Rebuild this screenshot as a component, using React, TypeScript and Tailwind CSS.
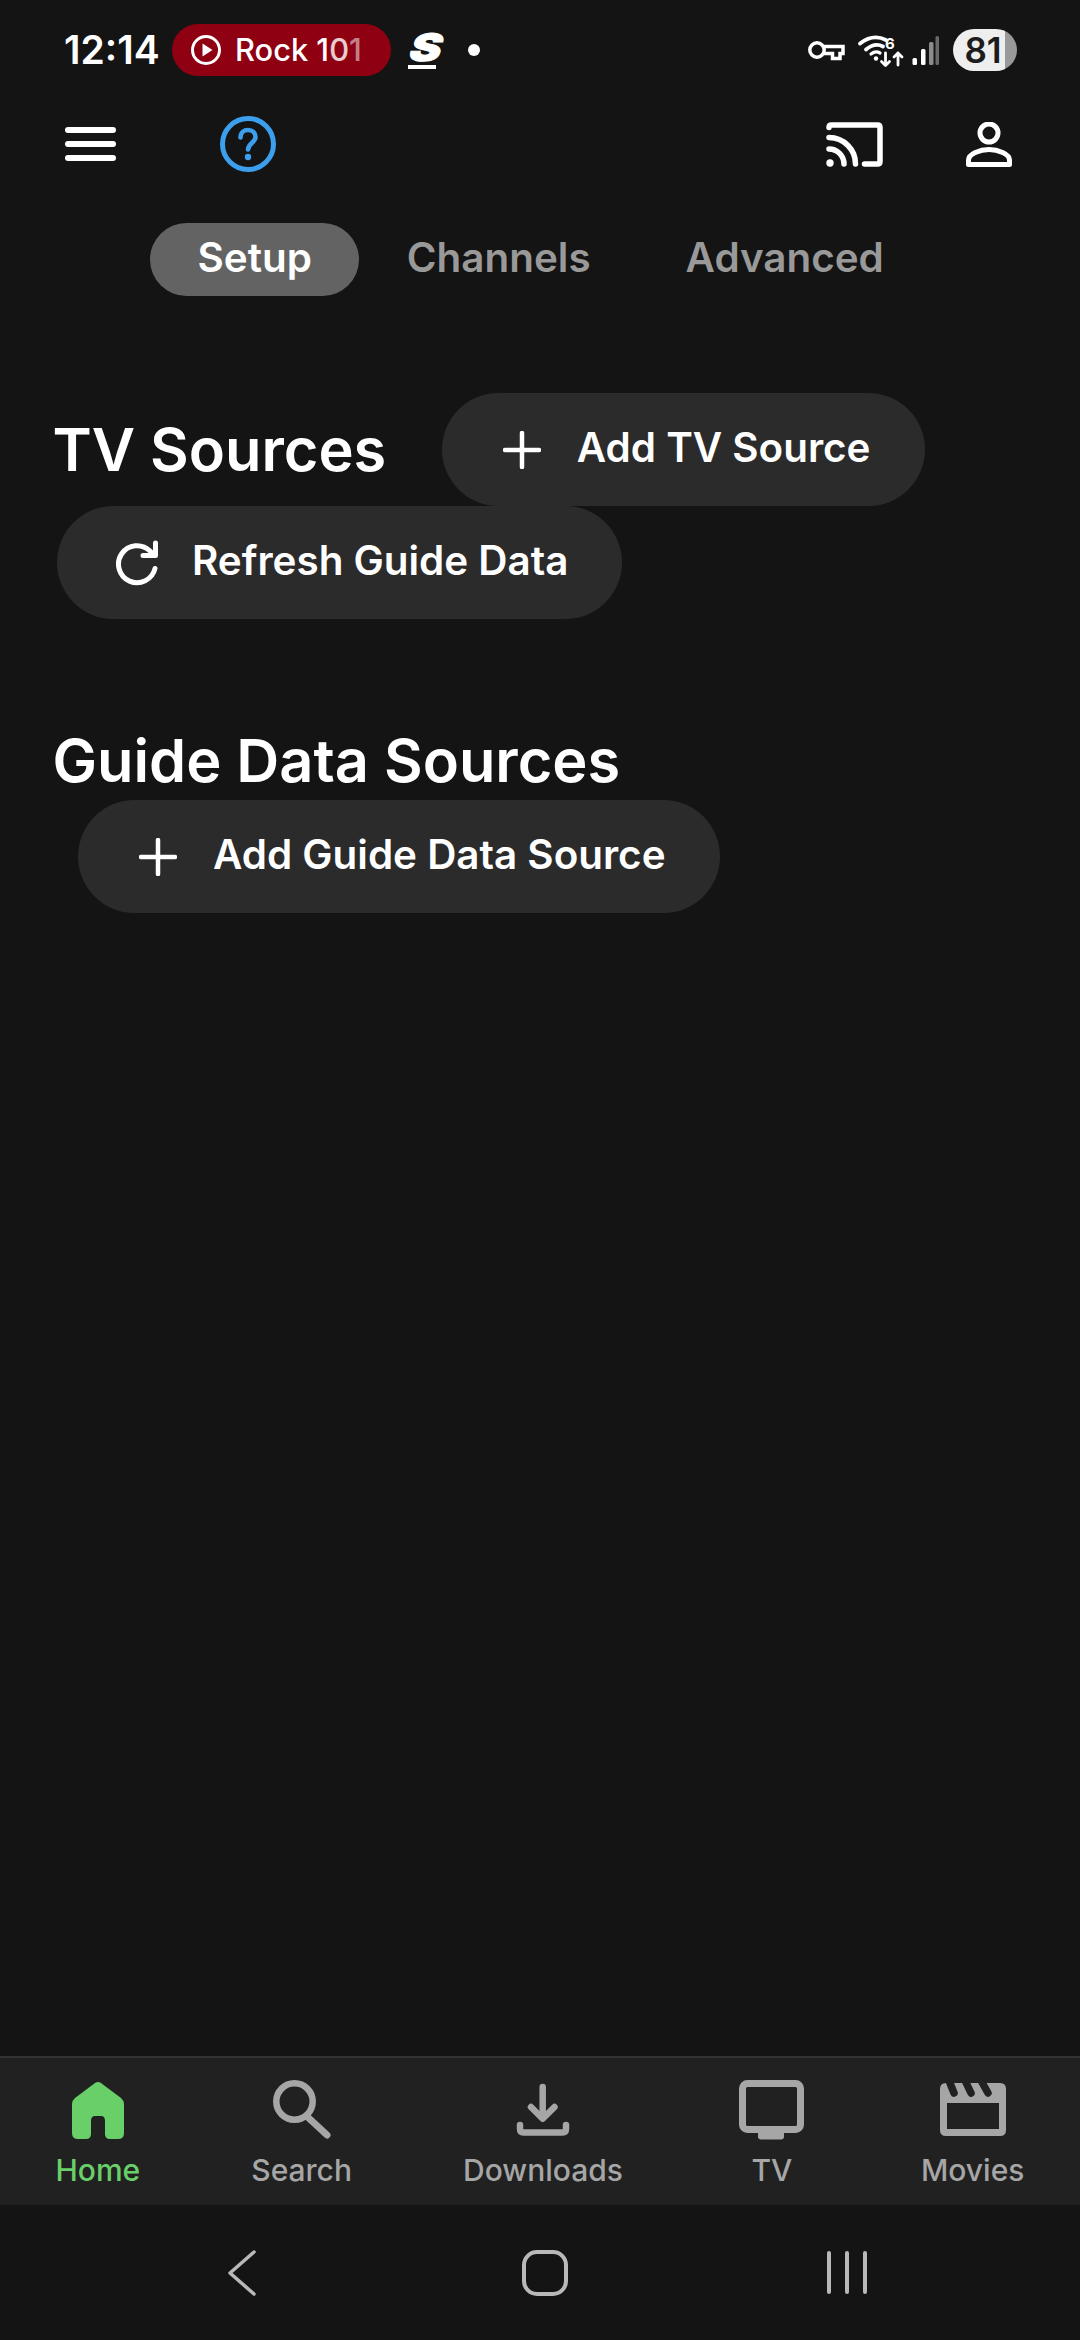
import React from 'react';

const PlusIcon = () => (
  <svg width="38" height="38" viewBox="0 0 38 38" fill="none" stroke="white" strokeWidth="4.5" strokeLinecap="round">
    <path d="M19 2v34M2 19h34" />
  </svg>
);

const RefreshIcon = () => (
  <svg width="46" height="46" viewBox="0 0 46 46" fill="none" stroke="white" strokeWidth="5" strokeLinecap="round" strokeLinejoin="round">
    <path d="M41 28.5A18.5 18.5 0 1 1 36 11L40 15" />
    <path d="M41.5 3v12.5H29" />
  </svg>
);

const ActionPill = ({ icon, label, className }: { icon: React.ReactNode; label: string; className: string }) => (
  <button className={`flex h-[113px] items-center gap-[25px] rounded-full bg-[#2b2b2b] pl-[50px] pr-[54px] ${className}`}>
    <span className="flex w-[60px] items-center justify-center">{icon}</span>
    <span className="pb-[2px] text-[40.4px] font-semibold text-white">{label}</span>
  </button>
);

const StatusBar = () => (
  <div className="flex h-[100px] items-center pl-[64px] pr-[63px] text-white">
    <span className="w-[95px] text-[39px] font-semibold">12:14</span>
    <div className="ml-[13px] flex h-[52px] w-[219px] items-center gap-[14px] rounded-full bg-[#8e0012] pl-[19px]">
      <svg width="30" height="30" viewBox="0 0 30 30" fill="none">
        <circle cx="15" cy="15" r="13.5" stroke="white" strokeWidth="3" />
        <path d="M11.5 8.5 21.5 15l-10 6.5z" fill="white" />
      </svg>
      <span className="text-[30.8px] font-medium leading-none">
        Rock 1<span className="text-white/80">0</span><span className="text-white/50">1</span>
      </span>
    </div>
    <div className="ml-[17px] flex w-[34px] flex-col items-center">
      <span className="translate-x-[2px] scale-x-125 skew-x-[-14deg] text-[38px] font-black leading-[31px] [-webkit-text-stroke:1px_white]">S</span>
      <div className="mt-[2px] h-[4px] w-[28px] -translate-x-[3px] bg-white" />
    </div>
    <div className="ml-[26px] h-[12px] w-[12px] rounded-full bg-white" />

    <svg className="ml-auto" width="37" height="22" viewBox="0 0 37 22" fill="none" stroke="white" strokeWidth="3.5">
      <circle cx="9" cy="11" r="7.2" />
      <path d="M16 7.5h19v7h-3v5h-7.5v-5H16" />
    </svg>
    <svg className="ml-[5px]" width="95" height="44" viewBox="0 0 95 44" fill="none" stroke="white" strokeLinecap="round">
      <path d="M10 15.5Q23 5.5 36 12" strokeWidth="3.8" />
      <path d="M16 21.5Q25 14 33 18.5" strokeWidth="3.8" />
      <path d="M21 26Q25.5 22.5 30 25" strokeWidth="3.2" />
      <circle cx="26" cy="30.5" r="2.2" fill="white" stroke="none" />
      <text x="35" y="20.500" fontSize="15" fontWeight="700" fill="white" stroke="none" fontFamily="Inter, sans-serif">6</text>
      <path d="M35.5 25v12M31.5 33.5l4 4 4-4M48 37V25M44 29l4-4 4 4" strokeWidth="2.8" strokeLinejoin="round" />
      <rect x="62.5" y="30" width="4.5" height="7" rx="1.5" fill="white" stroke="none" />
      <rect x="71" y="21" width="4.5" height="16" rx="1.5" fill="white" stroke="none" />
      <rect x="79" y="14" width="4.5" height="23" rx="1.5" fill="#8c8c8c" stroke="none" />
      <rect x="85.5" y="8" width="3.5" height="29" rx="1.5" fill="#6a6a6a" stroke="none" />
    </svg>
    <div className="ml-[8px] flex h-[42px] w-[64px] items-center justify-center rounded-full bg-[linear-gradient(90deg,#eeeeee_81%,#999999_81%)] pr-[4px] text-[35px] font-semibold text-[#1c1c1c]">
      81
    </div>
  </div>
);

const Toolbar = () => (
  <div className="flex h-[88px] items-center pl-[65px] pr-[68px]">
    <div className="flex w-[51px] flex-col gap-[8px]">
      <div className="h-[6px] rounded-full bg-white" />
      <div className="h-[6px] rounded-full bg-white" />
      <div className="h-[6px] rounded-full bg-white" />
    </div>
    <svg className="ml-[104px]" width="56" height="56" viewBox="0 0 56 56" fill="none">
      <circle cx="28" cy="28" r="25.5" stroke="#3b9fee" strokeWidth="5" />
      <path d="M20.5 21.5C20.5 16.5 24 14 28 14C32.5 14 35.5 17 35.5 21C35.5 26.5 28.5 27 28 33.5" stroke="#3b9fee" strokeWidth="4.6" strokeLinecap="round" />
      <circle cx="28" cy="41" r="3.200" fill="#3b9fee" />
    </svg>
    <svg className="ml-auto" width="57" height="45" viewBox="0 0 57 45" fill="none" stroke="white" strokeWidth="5.5" strokeLinecap="round">
      <path d="M3 5.5Q3 3 5.5 3H51.5Q54 3 54 5.5V39.5Q54 42 51.5 42H38.5" />
      <path d="M3 15.5A26.5 26.5 0 0 1 29.5 42" />
      <path d="M3 27A15 15 0 0 1 18 42" />
      <circle cx="4" cy="41" r="3.7" fill="white" stroke="none" />
    </svg>
    <svg className="ml-[83px]" width="46" height="45" viewBox="0 0 46 45" fill="none" stroke="white" strokeWidth="5" strokeLinejoin="round">
      <circle cx="23" cy="11" r="9" />
      <path d="M2.5 42.5V38C2.5 32 14 27.5 23 27.5C32 27.5 43.5 32 43.5 38V42.5Z" />
    </svg>
  </div>
);

const Tabs = () => (
  <div className="mt-[35px] flex pl-[150px] text-[40.4px] font-semibold">
    <div className="flex h-[73px] items-center rounded-full bg-[#636363] px-[47.5px] pb-[2px] text-white">Setup</div>
    <div className="flex h-[73px] items-center px-[47.5px] pb-[2px] text-[#999999]">Channels</div>
    <div className="flex h-[73px] items-center px-[47.5px] pb-[2px] text-[#999999]">Advanced</div>
  </div>
);

const HomeIcon = () => (
  <svg width="52" height="60" viewBox="0 -2 52 60" fill="#69cf68">
    <path fillRule="evenodd" d="M23 1Q26 -1 29 1L49 16Q52 18.5 52 22V51Q52 57 46 57H38Q33 57 33 52V39Q33 34 29 34H23Q19 34 19 39V52Q19 57 14 57H6Q0 57 0 51V22Q0 18.5 3 16Z" />
  </svg>
);

const SearchIcon = () => (
  <svg width="58" height="60" viewBox="0 0 58 60" fill="none" stroke="#a6a6a6" strokeLinecap="round">
    <circle cx="21.5" cy="21.5" r="18.2" strokeWidth="6.5" />
    <path d="M33.5 36 54 55" strokeWidth="7" />
  </svg>
);

const DownloadIcon = () => (
  <svg width="56" height="60" viewBox="14 10 56 60" fill="none" stroke="#a6a6a6" strokeWidth="6.5" strokeLinecap="round" strokeLinejoin="round">
    <path d="M41.7 17V48M30 37l11.7 11.7L53.500 37" />
    <path d="M19 55V59Q19 62.500 22.500 62.500H61.500Q65 62.500 65 59V55" />
  </svg>
);

const TvIcon = () => (
  <svg width="65" height="60" viewBox="0 0 65 60" fill="none">
    <rect x="3.500" y="3.500" width="58" height="46" rx="5" stroke="#a6a6a6" strokeWidth="7" />
    <rect x="19" y="50" width="26" height="9.500" rx="3" fill="#a6a6a6" />
  </svg>
);

const MoviesIcon = () => (
  <svg width="70" height="60" viewBox="8 10 70 60" fill="none">
    <path fillRule="evenodd" fill="#a6a6a6" d="M16 13H70Q76 13 76 19V60Q76 66 70 66H16Q10 66 10 60V19Q10 13 16 13ZM17 33V59H69V33Z" />
    <path d="M19 10.500 24 23M35 10.500 41 23M51 10.500 58 23" stroke="#212121" strokeWidth="7.500" strokeLinecap="round" />
  </svg>
);

const navItems = [
  { label: 'Home', icon: <HomeIcon />, color: 'text-[#69cf68]' },
  { label: 'Search', icon: <SearchIcon />, color: 'text-[#a6a6a6]' },
  { label: 'Downloads', icon: <DownloadIcon />, color: 'text-[#a6a6a6]' },
  { label: 'TV', icon: <div className="flex w-[76px] justify-center"><TvIcon /></div>, color: 'text-[#a6a6a6]' },
  { label: 'Movies', icon: <MoviesIcon />, color: 'text-[#a6a6a6]' },
];

const BottomNav = () => (
  <nav className="mt-auto flex h-[149px] justify-around border-t-2 border-[#333333] bg-[#212121] pt-[22px]">
    {navItems.map((item) => (
      <div key={item.label} className="flex flex-col items-center">
        {item.icon}
        <span className={`mt-[11px] text-[30px] font-medium leading-[38px] ${item.color}`}>{item.label}</span>
      </div>
    ))}
  </nav>
);

const SystemNav = () => (
  <div className="flex h-[135px] items-start pl-[228px] pt-[45px]">
    <svg width="28" height="46" viewBox="0 0 28 46" fill="none" stroke="#b9b9b9" strokeWidth="3.500" strokeLinecap="round" strokeLinejoin="round">
      <path d="M26 2 2 23l24 21" />
    </svg>
    <div className="ml-[266px] h-[46px] w-[46px] rounded-[15px] border-[4px] border-[#b9b9b9]" />
    <div className="ml-[259px] mt-[1px] flex gap-[14px]">
      <div className="h-[43px] w-[4px] rounded-full bg-[#b9b9b9]" />
      <div className="h-[43px] w-[4px] rounded-full bg-[#b9b9b9]" />
      <div className="h-[43px] w-[4px] rounded-full bg-[#b9b9b9]" />
    </div>
  </div>
);

export default function App() {
  return (
    <div className="flex h-[2340px] w-[1080px] flex-col overflow-hidden bg-[#141414] font-['Inter',sans-serif]">
      <StatusBar />
      <Toolbar />
      <Tabs />

      <div className="mt-[97px] flex items-center pl-[52.500px]">
        <h2 className="text-[59.5px] font-semibold text-white">TV Sources</h2>
        <ActionPill icon={<PlusIcon />} label="Add TV Source" className="ml-[55.500px]" />
      </div>
      <ActionPill icon={<RefreshIcon />} label="Refresh Guide Data" className="ml-[57px] self-start" />

      <h2 className="mt-[105px] h-[76px] pl-[52.500px] text-[59.5px] font-semibold leading-[72px] text-white">Guide Data Sources</h2>
      <ActionPill icon={<PlusIcon />} label="Add Guide Data Source" className="ml-[78px] self-start" />

      <BottomNav />
      <SystemNav />
    </div>
  );
}
